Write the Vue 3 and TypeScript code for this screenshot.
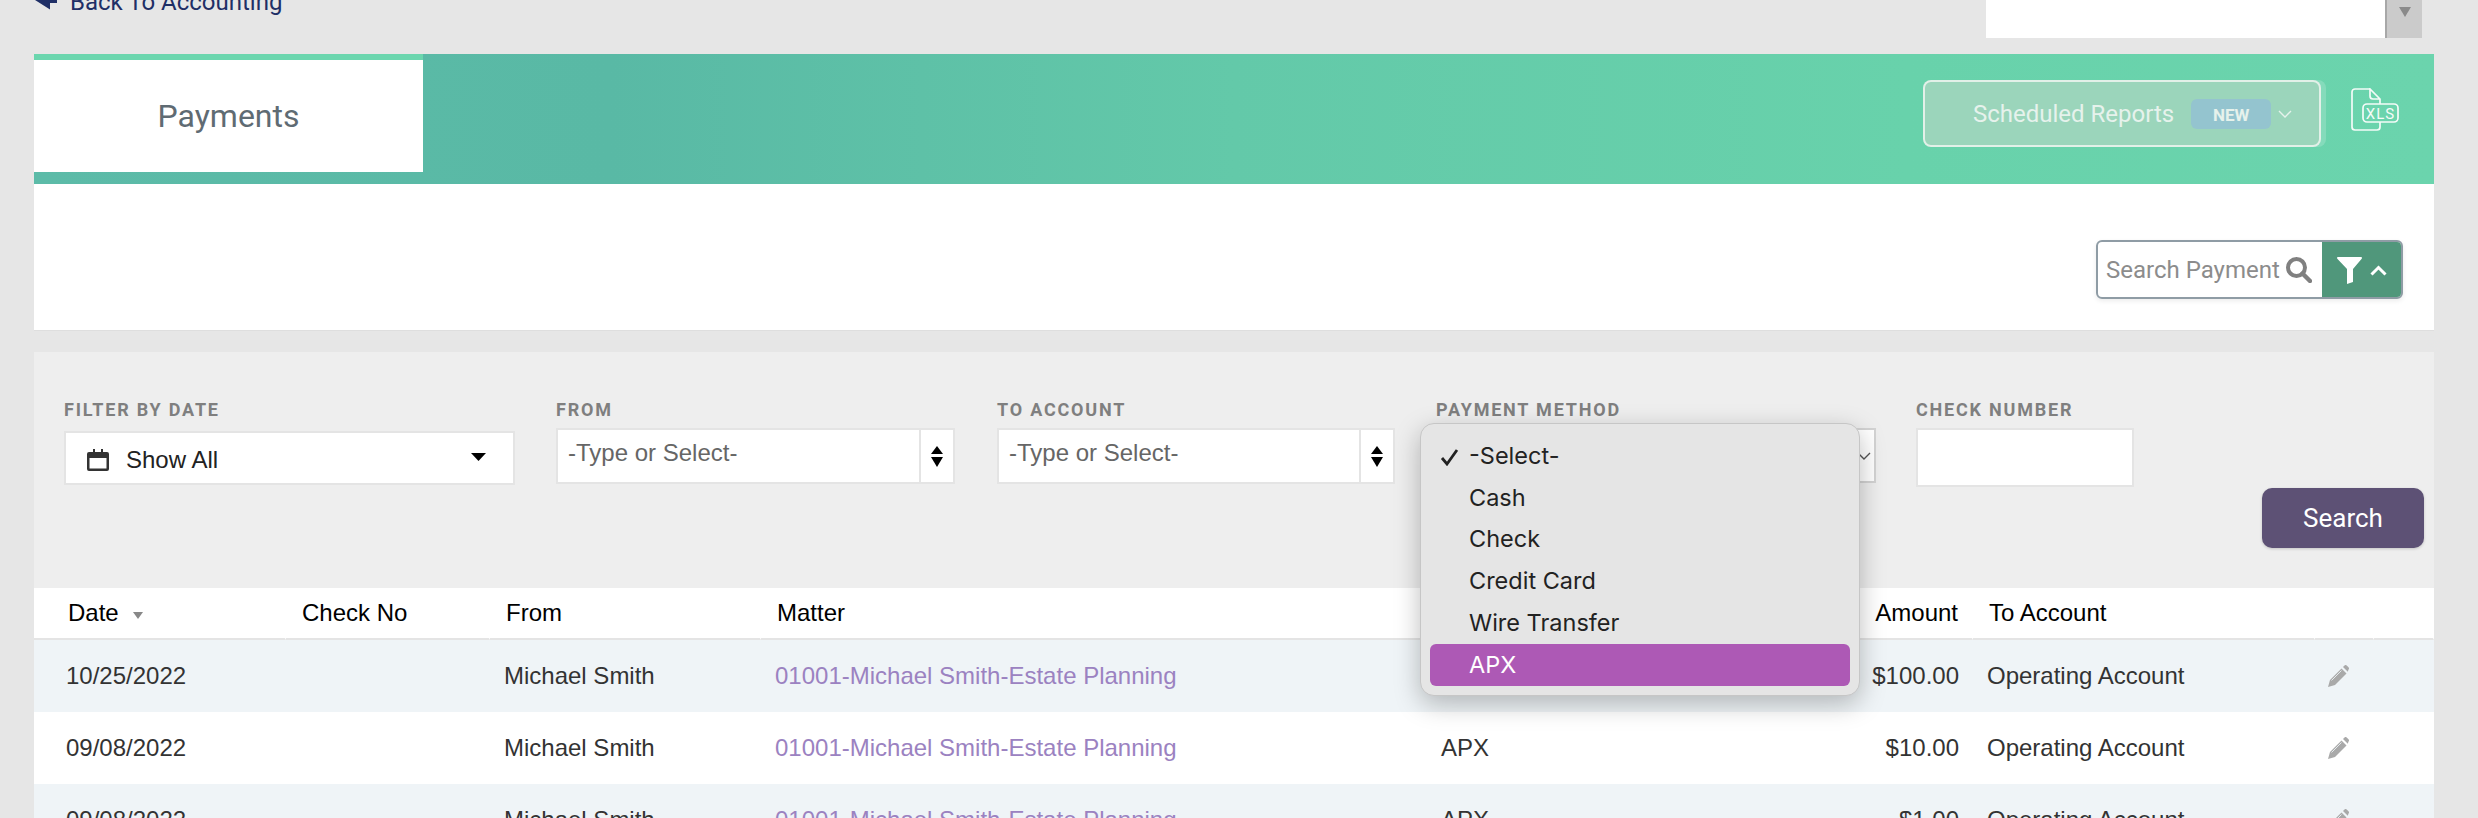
<script setup lang="ts">
interface Payment { date: string; from: string; matter: string; method: string; amount: string; account: string }
const rows: Payment[] = [
  { date: '10/25/2022', from: 'Michael Smith', matter: '01001-Michael Smith-Estate Planning', method: 'APX', amount: '$100.00', account: 'Operating Account' },
  { date: '09/08/2022', from: 'Michael Smith', matter: '01001-Michael Smith-Estate Planning', method: 'APX', amount: '$10.00', account: 'Operating Account' },
  { date: '09/08/2022', from: 'Michael Smith', matter: '01001-Michael Smith-Estate Planning', method: 'APX', amount: '$1.00', account: 'Operating Account' },
]
const methods: string[] = ['-Select-', 'Cash', 'Check', 'Credit Card', 'Wire Transfer', 'APX']
</script>

<template>
  <div class="page">
    <div class="top">
      <a class="back">
        <svg class="back-icon" viewBox="0 0 22 10" width="22" height="10"><polygon points="0,0 15,9.5 15,3 22,3 22,0" fill="#1f2f66" /></svg>
        <span class="back-text">Back To Accounting</span>
      </a>
      <div class="top-select">
        <span class="top-arrow-box"><svg viewBox="0 0 12 10" width="12" height="10"><polygon points="0,0 12,0 6,10" fill="#8a8a8a" /></svg></span>
      </div>
    </div>

    <div class="band">
      <div class="tab"><span>Payments</span></div>
      <div class="band-actions">
        <button class="sched">
          <span class="sched-text">Scheduled Reports</span>
          <span class="badge">NEW</span>
          <svg viewBox="0 0 14 8" width="14" height="8"><path d="M1 1l6 6 6-6" fill="none" stroke="#e6f2ec" stroke-width="1.4" /></svg>
        </button>
        <svg class="xls" viewBox="0 0 48 44" width="48" height="44" fill="none" stroke="#f4fbf8" stroke-width="1.7">
          <path d="M19 1H4a3 3 0 0 0-3 3v35a3 3 0 0 0 3 3h22a3 3 0 0 0 3-3v-5" />
          <path d="M29 16v-5L19 1v7a3 3 0 0 0 3 3h7" />
          <rect x="12" y="16" width="35" height="18" rx="4" />
          <text x="29.5" y="30.500" text-anchor="middle" class="xls-text">XLS</text>
        </svg>
      </div>
    </div>

    <div class="search-panel">
      <div class="search-box">
        <div class="search-input">
          <span class="search-ph">Search Payment</span>
          <svg viewBox="0 0 26 26" width="26" height="26" fill="none" stroke="#808080"><circle cx="10.5" cy="10.5" r="8.5" stroke-width="4" /><path d="M16.5 16.5l7.5 7.5" stroke-width="4.4" stroke-linecap="round" /></svg>
        </div>
        <div class="filter-btn">
          <svg viewBox="0 0 25 27" width="25" height="27"><path d="M1 0h23c1 0 1.300 1 .7 1.700L16 12v13l-6 2V12L.3 1.700C-.3 1 0 0 1 0z" fill="#fff" /></svg>
          <svg viewBox="0 0 17 11" width="17" height="11"><path d="M1.500 9.500l7-7 7 7" fill="none" stroke="#fff" stroke-width="3" /></svg>
        </div>
      </div>
    </div>

    <div class="filters">
      <div class="field f-date">
        <label>FILTER BY DATE</label>
        <div class="control date-control">
          <svg viewBox="0 0 22 22" width="22" height="22"><path d="M2 3h18a2 2 0 0 1 2 2v15a2 2 0 0 1-2 2H2a2 2 0 0 1-2-2V5a2 2 0 0 1 2-2zm.5 6v10.500h17V9z" fill="#333" fill-rule="evenodd" /><path d="M6 0h2v5H6zM14 0h2v5h-2z" fill="#333" /></svg>
          <span class="date-text">Show All</span>
          <svg class="caret" viewBox="0 0 15 8" width="15" height="8"><polygon points="0,0 15,0 7.500,8" fill="#000" /></svg>
        </div>
      </div>
      <div class="field f-from">
        <label>FROM</label>
        <div class="control combo">
          <span class="combo-text">-Type or Select-</span>
          <span class="combo-arrows">
            <svg viewBox="0 0 12 21" width="12" height="21"><polygon points="6,0 12,8 0,8" fill="#000" /><polygon points="0,11 12,11 6,21" fill="#000" /></svg>
          </span>
        </div>
      </div>
      <div class="field f-to">
        <label>TO ACCOUNT</label>
        <div class="control combo">
          <span class="combo-text">-Type or Select-</span>
          <span class="combo-arrows">
            <svg viewBox="0 0 12 21" width="12" height="21"><polygon points="6,0 12,8 0,8" fill="#000" /><polygon points="0,11 12,11 6,21" fill="#000" /></svg>
          </span>
        </div>
      </div>
      <div class="field f-method">
        <label>PAYMENT METHOD</label>
        <div class="control method-control">
          <svg viewBox="0 0 14 8" width="14" height="8"><path d="M1 1l6 6 6-6" fill="none" stroke="#555" stroke-width="1.400" /></svg>
        </div>
        <ul class="menu">
          <li v-for="(m, i) in methods" :key="m" class="menu-item" :class="{ active: i === methods.length - 1 }">
            <span class="tick">
              <svg v-if="i === 0" viewBox="0 0 19 18" width="19" height="18"><path d="M2 10l5 6L17 2" fill="none" stroke="#222" stroke-width="2.800" /></svg>
            </span>
            <span>{{ m }}</span>
          </li>
        </ul>
      </div>
      <div class="field f-check">
        <label>CHECK NUMBER</label>
        <div class="control check-control"></div>
      </div>
      <button class="search-btn">Search</button>
    </div>

    <table class="grid">
      <thead>
        <tr>
          <th class="c-date">
            Date
            <svg class="sort" viewBox="0 0 10 7" width="10" height="7"><polygon points="0,0 10,0 5,7" fill="#888" /></svg>
          </th>
          <th class="c-check">Check No</th>
          <th class="c-from">From</th>
          <th class="c-matter">Matter</th>
          <th class="c-method">Method</th>
          <th class="c-amount">Amount</th>
          <th class="c-account">To Account</th>
          <th class="c-edit"></th>
          <th class="c-end"></th>
        </tr>
      </thead>
      <tbody>
        <tr v-for="(r, i) in rows" :key="i">
          <td class="d-date">{{ r.date }}</td>
          <td></td>
          <td>{{ r.from }}</td>
          <td><a class="link">{{ r.matter }}</a></td>
          <td class="d-method">{{ r.method }}</td>
          <td class="d-amount">{{ r.amount }}</td>
          <td>{{ r.account }}</td>
          <td class="d-edit">
            <svg viewBox="0 0 21 22" width="21" height="22"><path d="M0 22l2-7L13.500 3.500l5 5L7 20z" fill="#a9a9a9" /><path d="M15 2l1.500-1.500c.7-.7 1.500-.7 2.200 0L20.500 2.300c.7.7.7 1.500 0 2.200L19.800 6.800 15 2z" fill="#a9a9a9" /><path d="M3.500 15.500L13.500 5.500" stroke="#e4e9ec" stroke-width="1" /></svg>
          </td>
          <td></td>
        </tr>
      </tbody>
    </table>
  </div>
</template>

<style scoped>
.page {
  width: 2478px;
  height: 818px;
  overflow: hidden;
  background: #e6e6e6;
  padding-left: 34px;
  box-sizing: border-box;
  font-family: "Liberation Sans", Arial, sans-serif;
}
.top {
  width: 2400px;
  height: 38px;
  margin-bottom: 16px;
  display: flex;
  justify-content: space-between;
  align-items: flex-start;
}
.back {
  display: flex;
  align-items: flex-start;
  color: #1f2f66;
  height: 38px;
}
.back-icon { margin-left: 1px; flex: none; }
.back-text {
  font: 400 24px/28px Roboto, sans-serif;
  margin: -12px 0 0 13px;
}
.top-select {
  width: 436px;
  height: 38px;
  margin-right: 12px;
  background: #fff;
  display: flex;
  justify-content: flex-end;
}
.top-arrow-box {
  width: 37px;
  height: 38px;
  background: #cbcbcb;
  border-left: 2px solid #a8a8a8;
  box-sizing: border-box;
  display: flex;
  justify-content: center;
  padding-top: 7px;
}
.band {
  width: 2400px;
  height: 130px;
  display: flex;
  align-items: flex-start;
  background: linear-gradient(90deg, #5cbba8 0%, #59b9a5 24%, #63c9a9 50%, #68d2ab 78%, #6bd4ad 100%);
}
.tab {
  width: 389px;
  height: 118px;
  background: #fff;
  border-top: 6px solid #6bd6ae;
  box-sizing: border-box;
  display: flex;
  align-items: center;
  justify-content: center;
  color: #5f6b73;
  font: 400 32px/36px Roboto, sans-serif;
}
.band-actions {
  margin-left: auto;
  margin-right: 35px;
  margin-top: 26px;
  display: flex;
  align-items: flex-start;
}
.sched {
  width: 398px;
  height: 67px;
  box-sizing: border-box;
  border: 2px solid rgba(238, 244, 240, 0.85);
  border-radius: 8px;
  background: #9bd5bb;
  box-shadow: 5px 0 0 rgba(255, 255, 255, 0.18);
  padding: 0 0 0 48px;
  display: flex;
  align-items: center;
  color: #e6f2ec;
  font: 400 24px/30px Roboto, sans-serif;
}
.sched-text { margin-right: 17px; white-space: nowrap; }
.badge {
  width: 80px;
  height: 30px;
  margin-right: 7px;
  border-radius: 6px;
  background: #94c4cf;
  font: 700 17px/32px Roboto, sans-serif;
  text-align: center;
}
.xls { margin-left: 30px; margin-top: 8px; flex: none; }
.xls-text {
  font: 400 15px Roboto, sans-serif;
  letter-spacing: 1px;
  fill: #f4fbf8;
  stroke: none;
}
.search-panel {
  width: 2400px;
  height: 146px;
  background: #fff;
  box-sizing: border-box;
  padding: 56px 31px 0 0;
  display: flex;
  justify-content: flex-end;
  align-items: flex-start;
  box-shadow: 0 1px 0 #dedede;
}
.search-box {
  width: 307px;
  height: 59px;
  box-sizing: border-box;
  border: 2px solid #8f9ca5;
  border-radius: 6px;
  display: flex;
  overflow: hidden;
  box-shadow: 0 2px 5px rgba(0, 0, 0, 0.08);
}
.search-input {
  width: 224px;
  display: flex;
  align-items: center;
  padding-left: 8px;
  box-sizing: border-box;
}
.search-ph {
  color: #8c8c8c;
  font: 400 24px/30px Roboto, sans-serif;
  width: 180px;
  flex: none;
  white-space: nowrap;
}
.filter-btn {
  flex: 1;
  background: #50977b;
  display: flex;
  align-items: center;
  gap: 8px;
  padding: 2px 0 0 15px;
}
.filters {
  width: 2400px;
  height: 236px;
  margin-top: 22px;
  background: #eeeeee;
  box-sizing: border-box;
  padding: 48px 10px 0 30px;
  display: flex;
  align-items: flex-start;
  gap: 41px;
}
.field { position: relative; flex: none; }
.field label {
  display: block;
  height: 20px;
  margin-bottom: 8px;
  color: #7f7f7f;
  font: 700 18px/20px Roboto, sans-serif;
  letter-spacing: 1.8px;
  white-space: nowrap;
}
.f-date { width: 451px; }
.f-from { width: 399px; margin-right: 1px; }
.f-to { width: 398px; }
.f-method { width: 440px; margin-right: -1px; }
.f-check { width: 218px; }
.control {
  box-sizing: border-box;
  background: #fff;
  border: 2px solid #e4e4e4;
}
.date-control {
  height: 54px;
  margin-top: 11px;
  display: flex;
  align-items: center;
  padding: 4px 0 0 21px;
  color: #222;
}
.date-text { font-size: 24px; line-height: 28px; margin-left: 17px; }
.caret { margin-left: auto; margin-right: 27px; margin-top: -6px; }
.combo {
  height: 56px;
  display: flex;
}
.combo-text {
  flex: 1;
  padding-left: 10px;
  color: #666;
  font-size: 24px;
  line-height: 46px;
  white-space: nowrap;
}
.combo-arrows {
  width: 32px;
  border-left: 2px solid #e4e4e4;
  display: flex;
  align-items: center;
  justify-content: center;
}
.method-control {
  height: 55px;
  border-color: #d3d3d3;
  display: flex;
  align-items: center;
  justify-content: flex-end;
  padding-right: 3px;
}
.check-control { height: 59px; }
.menu {
  position: absolute;
  left: -16px;
  top: 23px;
  z-index: 5;
  width: 440px;
  height: 273px;
  margin: 0;
  padding: 11px 9px 0;
  box-sizing: border-box;
  list-style: none;
  background: #e5e5e5;
  border: 1px solid #c6c6c6;
  border-radius: 14px;
  box-shadow: 0 8px 26px rgba(0, 0, 0, 0.26);
  color: #222;
  font: 400 23.500px/30px Inter, sans-serif;
}
.menu-item {
  height: 41.800px;
  display: flex;
  align-items: center;
  border-radius: 6px;
}
.menu-item.active { background: #ad59b5; color: #fff; }
.tick {
  width: 39px;
  flex: none;
  display: flex;
  justify-content: center;
  margin-top: 3px;
}
.search-btn {
  margin-left: auto;
  margin-top: 88px;
  width: 162px;
  height: 60px;
  border: 0;
  border-radius: 10px;
  background: #5d5175;
  box-shadow: 0 1px 3px rgba(0, 0, 0, 0.18);
  color: #fff;
  font: 400 26px/30px Roboto, sans-serif;
  flex: none;
}
.grid {
  width: 2400px;
  table-layout: fixed;
  border-collapse: separate;
  border-spacing: 0;
  font-size: 24px;
}
.grid th {
  height: 52px;
  box-sizing: border-box;
  padding: 0 0 0 16px;
  background: #fff;
  color: #000;
  font-weight: 400;
  text-align: left;
  border-bottom: 2px solid #e4e4e4;
  border-right: 1px solid #fff;
  white-space: nowrap;
}
.grid td {
  height: 72px;
  padding: 0 0 0 14px;
  color: #333;
  white-space: nowrap;
}
.grid tbody tr { background: #fff; }
.grid tbody tr:nth-child(odd) { background: #eff4f7; }
.grid th.c-date { width: 252px; padding-left: 34px; }
.c-check { width: 204px; }
.c-from { width: 271px; }
.c-matter { width: 664px; }
.c-method { width: 355px; }
.c-amount { width: 193px; }
.c-account { width: 342px; }
.c-edit { width: 59px; }
.grid th.c-amount { text-align: right; padding: 0 14px 0 0; }
.sort { margin-left: 8px; vertical-align: 2px; }
.grid td.d-date { padding-left: 32px; }
.grid td.d-method { padding-left: 16px; }
.grid td.d-amount { text-align: right; padding: 0 14px 0 0; }
.grid td.d-edit { padding-left: 13px; }
.d-edit svg { display: block; }
.link { color: #9b82c1; }
</style>

<style>
html, body { margin: 0; overflow: hidden; background: #e6e6e6; }
</style>
